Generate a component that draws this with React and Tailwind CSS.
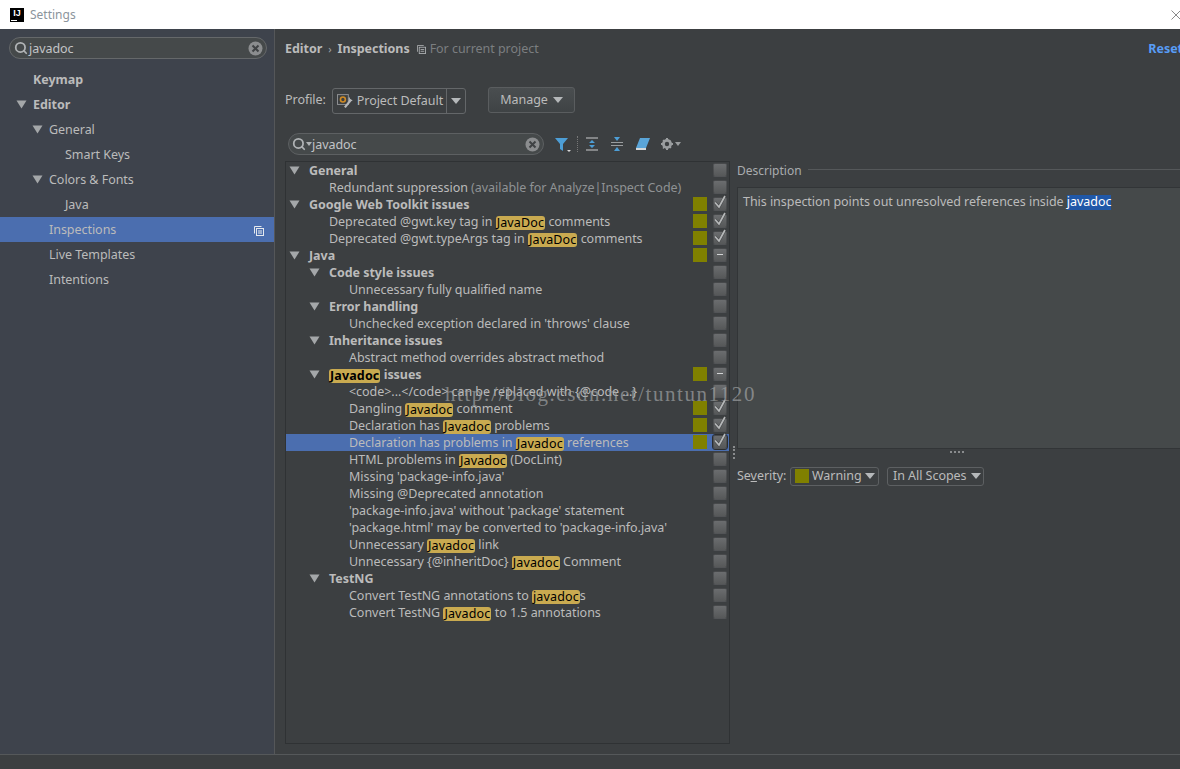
import React from 'react';
import { Search } from 'lucide-react';

const rows = [
    { level: 0, text: 'General', group: true, check: 'off' },
    { level: 1, text: 'Redundant suppression', note: ' (available for Analyze|Inspect Code)', check: 'off' },
    { level: 0, text: 'Google Web Toolkit issues', group: true, warn: true, check: 'on' },
    { level: 1, text: 'Deprecated @gwt.key tag in [JavaDoc] comments', warn: true, check: 'on' },
    { level: 1, text: 'Deprecated @gwt.typeArgs tag in [JavaDoc] comments', warn: true, check: 'on' },
    { level: 0, text: 'Java', group: true, warn: true, check: 'mixed' },
    { level: 1, text: 'Code style issues', group: true, check: 'off' },
    { level: 2, text: 'Unnecessary fully qualified name', check: 'off' },
    { level: 1, text: 'Error handling', group: true, check: 'off' },
    { level: 2, text: "Unchecked exception declared in 'throws' clause", check: 'off' },
    { level: 1, text: 'Inheritance issues', group: true, check: 'off' },
    { level: 2, text: 'Abstract method overrides abstract method', check: 'off' },
    { level: 1, text: '[Javadoc] issues', group: true, warn: true, check: 'mixed' },
    { level: 2, text: '<code>...</code> can be replaced with {@code ...}', check: 'off' },
    { level: 2, text: 'Dangling [Javadoc] comment', warn: true, check: 'on' },
    { level: 2, text: 'Declaration has [Javadoc] problems', warn: true, check: 'on' },
    { level: 2, text: 'Declaration has problems in [Javadoc] references', warn: true, check: 'on', selected: true },
    { level: 2, text: 'HTML problems in [Javadoc] (DocLint)', check: 'off' },
    { level: 2, text: "Missing 'package-info.java'", check: 'off' },
    { level: 2, text: 'Missing @Deprecated annotation', check: 'off' },
    { level: 2, text: "'package-info.java' without 'package' statement", check: 'off' },
    { level: 2, text: "'package.html' may be converted to 'package-info.java'", check: 'off' },
    { level: 2, text: 'Unnecessary [Javadoc] link', check: 'off' },
    { level: 2, text: 'Unnecessary {@inheritDoc} [Javadoc] Comment', check: 'off' },
    { level: 1, text: 'TestNG', group: true, check: 'off' },
    { level: 2, text: 'Convert TestNG annotations to [javadoc]s', check: 'off' },
    { level: 2, text: 'Convert TestNG [Javadoc] to 1.5 annotations', check: 'off' },
];

const nav = [
    { label: 'Keymap', indent: 'pl-[33px]', bold: true },
    { label: 'Editor', indent: 'pl-[33px]', bold: true, arrow: 'left-[16px]' },
    { label: 'General', indent: 'pl-[49px]', arrow: 'left-[32px]' },
    { label: 'Smart Keys', indent: 'pl-[65px]' },
    { label: 'Colors & Fonts', indent: 'pl-[49px]', arrow: 'left-[32px]' },
    { label: 'Java', indent: 'pl-[65px]' },
    { label: 'Inspections', indent: 'pl-[49px]', selected: true },
    { label: 'Live Templates', indent: 'pl-[49px]' },
    { label: 'Intentions', indent: 'pl-[49px]' },
];

const indents = ['pl-[23px]', 'pl-[43px]', 'pl-[63px]'];
const arrowSpots = ['left-[3px]', 'left-[23px]'];

const Arrow = ({ className = '' }) => (
    <svg width="11" height="9" viewBox="0 0 11 9" className={className}>
        <path d="M0.5 0.5h10L5.5 8.5z" fill="#a4a7a9" />
    </svg>
);

const SmallDown = ({ fill = '#b5b8ba' }) => (
    <svg width="10" height="6" viewBox="0 0 10 6">
        <path d="M0 0h10L5 6z" fill={fill} />
    </svg>
);

const CopyIcon = ({ color = '#c8cccf', size = 10 }) => (
    <svg width={size} height={size} viewBox="0 0 10 10" fill="none" stroke={color} strokeWidth="1">
        <path d="M0.5 7.5v-7h7" />
        <rect x="2.5" y="2.5" width="7" height="7" />
        <path d="M4 5h4M4 7h4" />
    </svg>
);

const ClearIcon = () => (
    <svg width="15" height="15" viewBox="0 0 15 15">
        <circle cx="7.5" cy="7.5" r="7" fill="#8b8d8f" />
        <path d="M4.5 4.500l6 6M10.5 4.500l-6 6" stroke="#3f4244" strokeWidth="2" />
    </svg>
);

const Label = ({ text }) => {
    const parts = text.split(/(\[[^\]]+\])/);
    return parts.map((part, i) =>
        part.startsWith('[') ? (
            <span key={i} className="inline-block h-[14px] leading-[13px] align-[-1px] px-[1px] tracking-[0.15px] bg-[#c9aa50] text-black rounded-[3px]">{part.slice(1, -1)}</span>
        ) : (
            <span key={i}>{part}</span>
        )
    );
};

const CheckBox = ({ state, selected }) => (
    <div className={`relative w-[14px] h-[14px] rounded-[2px] bg-gradient-to-b from-[#6b6d6f] to-[#565859] border border-[#2f3234]/40 ${selected ? 'outline outline-1 outline-[#2b2d2f]' : ''}`}>
        {state === 'on' && (
            <svg width="14" height="16" viewBox="0 0 14 16" className="absolute left-[-1px] top-[-4px]" fill="none">
                <path d="M2 8.500l4 4.500 6-11" stroke="#2f3234" strokeWidth="2.8" opacity="0.5" />
                <path d="M2 8.500l4 4.500 6-11" stroke="#b6b8b9" strokeWidth="1.7" />
            </svg>
        )}
        {state === 'mixed' && <div className="absolute left-[3px] top-[5px] w-[6px] h-[1px] bg-[#d2d4d5]" />}
    </div>
);

const TreeRow = ({ row }) => (
    <div className={`relative flex items-center h-[17px] pt-[2px] ${indents[row.level]} ${row.selected ? 'bg-[#4b6eaf]' : ''}`}>
        {row.group && <Arrow className={`absolute top-[4px] ${arrowSpots[row.level]}`} />}
        <span className={`whitespace-pre ${row.group ? 'font-bold' : ''}`}>
            <Label text={row.text} />
            {row.note && <span className="text-[#8f9294]">{row.note}</span>}
        </span>
        <div className="absolute top-[1px] left-[407px] w-[14px] h-[14px]">
            {row.warn && <div className="w-[14px] h-[14px] bg-[#808000]" />}
        </div>
        <div className="absolute top-[1px] left-[427px]">
            <CheckBox state={row.check} selected={row.selected} />
        </div>
    </div>
);

const App = () => {
    return (
        <div className="relative w-[1180px] h-[769px] flex flex-col overflow-hidden bg-[#3c3f41] text-[#bbbbbb] text-[12.5px] tracking-[-0.04px] font-['Noto_Sans','Open_Sans',sans-serif]">
            {/* title bar */}
            <div className="h-[29px] shrink-0 bg-white flex items-center pl-[10px]">
                <div className="relative w-[14px] h-[14px] bg-black text-white text-[9px] font-bold leading-[11px] text-center font-['Liberation_Sans',sans-serif]">
                    IJ
                    <div className="absolute left-[1px] bottom-[1px] w-[6px] h-[1px] bg-white" />
                </div>
                <span className="ml-[6px] text-[#8b949c] text-[12px] tracking-normal">Settings</span>
                <svg width="10" height="10" viewBox="0 0 10 10" className="ml-auto mr-[-1px]" stroke="#8a8a8a" fill="none">
                    <path d="M0.5 0.5l9 9M9.5 0.5l-9 9" />
                </svg>
                <div className="w-[0px]" />
            </div>

            <div className="flex-1 flex min-h-0">
                {/* sidebar */}
                <div className="w-[275px] shrink-0 bg-[#3e434c] border-r border-[#555759] pt-[8px]">
                    <div className="mx-[9px] w-[258px] h-[22px] rounded-full border border-[#65686a] bg-[#45494a] flex items-center pl-[4px] pr-[3px] mb-[8px]">
                        <Search size={14} strokeWidth={3} color="#b0b3b5" />
                        <span className="ml-[1px] mt-[2px] flex-1 text-[#c2c4c6]">javadoc</span>
                        <ClearIcon />
                    </div>
                    {nav.map((item) => (
                        <div
                            key={item.label}
                            className={`relative h-[25px] pt-[2px] flex items-center ${item.indent} ${item.bold ? 'font-bold' : ''} ${item.selected ? 'bg-[#4b6eaf]' : ''}`}
                        >
                            {item.arrow && <Arrow className={`absolute top-[8px] ${item.arrow}`} />}
                            <span>{item.label}</span>
                            {item.selected && (
                                <div className="ml-auto mr-[10px] flex">
                                    <CopyIcon color="#e4e8ee" />
                                </div>
                            )}
                        </div>
                    ))}
                </div>

                {/* inspections panel */}
                <div className="flex-1 min-w-0 flex flex-col overflow-hidden pl-[10px]">
                    <div className="h-[39px] pt-[1px] flex items-center whitespace-nowrap shrink-0">
                        <span className="font-bold">Editor</span>
                        <span className="mx-[6px] text-[11px] text-[#a0a3a5]">›</span>
                        <span className="font-bold">Inspections</span>
                        <div className="ml-[7px] mr-[4px] flex"><CopyIcon color="#a9acae" size={9} /></div>
                        <span className="text-[#7b7e80]">For current project</span>
                        <span className="ml-auto mr-[-3px] font-bold text-[#589df6]">Reset</span>
                    </div>

                    <div className="h-[65px] shrink-0 flex items-start pt-[19px]">
                        <span className="mt-[4px] w-[47px]">Profile:</span>
                        <div className="mt-[1px] w-[134px] h-[26px] border border-[#646769] rounded-[3px] flex items-center">
                            <svg width="16" height="16" viewBox="0 0 16 16" className="ml-[4px]" fill="none">
                                <rect x="0.5" y="1.5" width="11" height="10" stroke="#8e9092" />
                                <circle cx="6" cy="6.500" r="2.5" stroke="#d08b25" strokeWidth="1.6" />
                                <path d="M14.5 6.500l-6.500 8" stroke="#b6b8ba" strokeWidth="2.2" />
                                <path d="M12.5 4.500v3h3" stroke="#b6b8ba" strokeWidth="1.2" />
                            </svg>
                            <span className="ml-[4px] mt-[1px] w-[91px] whitespace-nowrap">Project Default</span>
                            <div className="h-full w-[19px] border-l border-[#646769] flex items-center justify-center">
                                <SmallDown />
                            </div>
                        </div>
                        <div className="ml-[22px] w-[87px] h-[26px] rounded-[3px] border border-[#5a5d5f] bg-gradient-to-b from-[#4a4e50] to-[#3f4345] flex items-center justify-center gap-[5px]">
                            <span>Manage</span>
                            <SmallDown />
                        </div>
                    </div>

                    <div className="h-[22px] shrink-0 flex items-center ml-[3px]">
                        <div className="w-[256px] h-[22px] rounded-full border border-[#5d6062] bg-[#45494a] flex items-center pl-[3px] pr-[3px]">
                            <Search size={14} strokeWidth={3} color="#b0b3b5" />
                            <svg width="6" height="4" viewBox="0 0 6 4"><path d="M0 0h6L3 4z" fill="#b0b3b5" /></svg>
                            <span className="flex-1 mt-[2px] text-[#c2c4c6]">javadoc</span>
                            <ClearIcon />
                        </div>
                        <svg width="18" height="18" viewBox="0 0 18 18" className="ml-[10px]">
                            <path d="M1 3h13l-5 6v7l-3-2V9z" fill="#4d9ed6" />
                            <path d="M13 15h4l-2 2z" fill="#d8d8d8" />
                        </svg>
                        <div className="ml-[5px] h-[16px] border-l border-dotted border-[#777]" />
                        <svg width="14" height="14" viewBox="0 0 14 14" className="ml-[7px]">
                            <path d="M1 1h12M1 13h12" stroke="#9a9d9f" strokeWidth="1.4" />
                            <path d="M7 3l3 3H4zM7 11l3-3H4z" fill="#4d9ed6" />
                        </svg>
                        <svg width="14" height="14" viewBox="0 0 14 14" className="ml-[11px]">
                            <path d="M1 5.500h12M1 8.500h12" stroke="#9a9d9f" strokeWidth="1.2" />
                            <path d="M4 0h6L7 4zM4 14h6l-3-4z" fill="#4d9ed6" />
                        </svg>
                        <svg width="16" height="14" viewBox="0 0 16 14" className="ml-[11px]">
                            <path d="M5 1h10l-4 10H1z" fill="#5aa5d8" />
                            <path d="M1 11h10v2H1z" fill="#d4d8da" />
                        </svg>
                        <svg width="14" height="14" viewBox="0 0 14 14" className="ml-[9px]" fill="#9a9d9f">
                            <circle cx="7" cy="7" r="3.600" fill="none" stroke="#9a9d9f" strokeWidth="2.8" />
                            <path d="M6 1h2v2H6zM6 11h2v2H6zM1 6h2v2H1zM11 6h2v2h-2zM2.500 3.500l1-1 1.500 1.500-1 1zM9 10l1-1 1.500 1.500-1 1zM10 3l1 1-1.500 1.500-1-1zM3.500 9.500l1 1L3.500 12l-1-1z" />
                        </svg>
                        <svg width="6" height="4" viewBox="0 0 6 4" className="ml-[1px]"><path d="M0 0h6L3 4z" fill="#9a9d9f" /></svg>
                    </div>

                    <div className="flex-1 min-h-0 flex mt-[6px] mb-[10px]">
                        <div className="w-[445px] shrink-0 border border-[#2f3234]">
                            {rows.map((row) => <TreeRow key={row.text} row={row} />)}
                        </div>

                        <div className="relative w-[7px] shrink-0">
                            <div className="absolute left-[3px] top-[285px] h-[13px] border-l-2 border-dotted border-[#8a8c8e]" />
                        </div>

                        <div className="w-[450px] shrink-0">
                            <div className="flex items-center h-[20px]">
                                <span className="text-[12px] tracking-normal text-[#a9acae]">Description</span>
                                <div className="flex-1 ml-[6px] mb-[3px] border-t border-[#55585a]" />
                            </div>
                            <div className="mt-[6px] h-[262px] bg-[#45494a] border border-[#323537] px-[5px] py-[5px]">
                                This inspection points out unresolved references inside{' '}
                                <span className="inline-block h-[15px] leading-[14px] bg-[#2058a8] text-white">javadoc</span>
                            </div>
                            <div className="flex justify-center h-[6px]">
                                <div className="mt-[2px] w-[14px] mr-[10px] h-[3px] border-t-2 border-dotted border-[#8a8c8e]" />
                            </div>
                            <div className="mt-[11px] flex items-center h-[20px]">
                                <span className="w-[53px]">Se<span className="underline">v</span>erity:</span>
                                <div className="w-[89px] h-[19px] border border-[#5d6062] rounded-[3px] flex items-center pl-[4px] gap-[3px]">
                                    <div className="w-[14px] h-[14px] bg-[#808000]" />
                                    <span>Warning</span>
                                    <SmallDown />
                                </div>
                                <div className="ml-[8px] w-[97px] h-[19px] border border-[#5d6062] rounded-[3px] flex items-center pl-[5px] gap-[4px] whitespace-nowrap">
                                    <span>In All Scopes</span>
                                    <SmallDown />
                                </div>
                            </div>
                        </div>
                    </div>
                </div>
            </div>

            <div className="h-[15px] shrink-0 border-t border-[#55585a]" />

            {/* blog watermark over the tree */}
            <span className="absolute left-[445px] top-[379px] text-[21px] tracking-[1.55px] text-[#a0a3a5]/70 font-['Liberation_Serif',serif] whitespace-nowrap pointer-events-none">
                http://blog.csdn.net/tuntun1120
            </span>
        </div>
    );
};

export default App;
